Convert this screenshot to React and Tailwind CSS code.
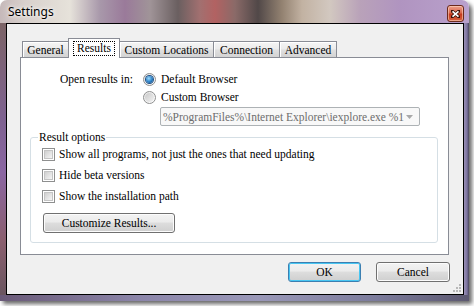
import React from "react";

const TXT = "text-[11.5px] leading-[16px] text-black";
const TAB_FONT = "font-['Liberation_Serif'] " + TXT;
const PANEL_FONT = "font-[family-name:Liberation_Serif] " + TXT;
const BTN_FONT = "[font-family:Liberation_Serif] " + TXT;

const TABS = [
  { label: "General", w: "w-[47px]" },
  { label: "Results", w: "w-[52px]", active: true },
  { label: "Custom Locations", w: "w-[95px]" },
  { label: "Connection", w: "w-[67px]" },
  { label: "Advanced", w: "w-[58px]" },
];

function Radio({ checked }) {
  return (
    <span className="flex h-[13px] w-[13px] shrink-0 items-center justify-center rounded-full border border-[#8e8f8f] bg-[linear-gradient(135deg,#e6e6e6,#ffffff)]">
      {checked ? (
        <span className="h-[7px] w-[7px] rounded-full bg-[radial-gradient(circle_at_40%_35%,#9edcff,#2a7fc4_55%,#0b3c73)] shadow-[0_0_0_1px_#1d4f86]" />
      ) : (
        <span className="h-[9px] w-[9px] rounded-full bg-[linear-gradient(135deg,#c9c9c9,#f2f2f2)]" />
      )}
    </span>
  );
}

function Checkbox() {
  return (
    <span className="flex h-[13px] w-[13px] shrink-0 items-center justify-center border border-[#8e8f8f] bg-white">
      <span className="h-[9px] w-[9px] border border-[#c4c4c4] bg-[linear-gradient(135deg,#cfcfcf,#f5f5f5)]" />
    </span>
  );
}

function Button({ children, width, isDefault }) {
  return (
    <button
      type="button"
      className={
        "flex h-[20px] items-center justify-center rounded-[3px] border bg-[linear-gradient(#f3f3f3,#ebebeb_45%,#dddddd_50%,#cfcfcf)] pb-px " +
        BTN_FONT +
        " " +
        width +
        (isDefault
          ? " border-[#3c7fb1] shadow-[inset_0_0_0_1px_#48c6f2]"
          : " border-[#707070] shadow-[inset_0_0_0_1px_#fcfcfc]")
      }
    >
      {children}
    </button>
  );
}

function CheckRow({ children }) {
  return (
    <div className="flex h-[16px] items-center gap-[4px]">
      <Checkbox />
      <span>{children}</span>
    </div>
  );
}

export default function App() {
  return (
    <div className="h-[306px] w-[474px] overflow-hidden bg-white">
      <div className="flex h-[301px] w-[469px] flex-col overflow-hidden rounded-t-[7px] shadow-[3px_3px_4px_rgba(0,0,0,0.6)]">
        {/* title bar */}
        <div className="flex h-[23px] shrink-0 items-start justify-between bg-[linear-gradient(90deg,#c6b9ba_0px,#d8d0cc_25px,#e6e2da_70px,#a898aa_100px,#9a7a9a_125px,#a09498_150px,#6a5f60_178px,#a27070_200px,#b26262_215px,#8a6a68_235px,#514848_258px,#938271_282px,#c2b2a2_302px,#d2c8c0_330px,#b9a2b9_360px,#b094c0_400px,#b9a1cc_469px)] pl-[8px] pr-[5px]">
          <span className="mt-[4px] font-sans text-[12px] leading-[16px] text-black [text-shadow:0_0_6px_#fff,0_0_3px_#fff]">
            Settings
          </span>
          <span className="mt-[5px] flex h-[17px] w-[17px] items-center justify-center rounded-[3px] border border-[#6b2a1c] bg-[linear-gradient(#eea08a,#d8674c_45%,#c5391d_55%,#d7623f)] shadow-[inset_0_0_0_1px_rgba(255,220,200,0.55)]">
            <svg width="9" height="8" viewBox="0 0 9 8">
              <path d="M1 1 L8 7 M8 1 L1 7" stroke="#3a1208" strokeWidth="3.2" strokeLinecap="square" />
              <path d="M1.5 1.3 L7.5 6.7 M7.5 1.3 L1.5 6.7" stroke="#ffffff" strokeWidth="1.6" />
            </svg>
          </span>
        </div>

        <div className="flex flex-1">
          <div className="w-[6px] bg-[linear-gradient(#7c6466,#7e6290_35%,#8a66a2_55%,#8a5f6e_80%,#6a5660)]" />

          {/* client area */}
          <div className="flex flex-1 flex-col border border-black bg-[#f0f0f0] pl-[13px] pt-[14px]">
            {/* tab strip */}
            <div className="ml-[2px] flex items-end">
              {TABS.map((t, i) =>
                t.active ? (
                  <div
                    key={t.label}
                    className={
                      "relative z-10 -mb-px -ml-px flex h-[20px] items-start justify-center border border-b-0 border-[#898c95] bg-white pt-[2px] " +
                      t.w +
                      " " +
                      TAB_FONT
                    }
                  >
                    <span className="border border-dotted border-black px-[3px] leading-[13px]">{t.label}</span>
                  </div>
                ) : (
                  <div
                    key={t.label}
                    className={
                      "flex h-[16px] items-center justify-center border border-b-0 border-[#898c95] bg-[linear-gradient(#f5f5f5,#ececec_45%,#dfdfdf_55%,#d3d3d3)] pt-px shadow-[inset_1px_1px_0_#ffffff] " +
                      (i > 0 ? "-ml-px " : "") +
                      t.w +
                      " " +
                      TAB_FONT
                    }
                  >
                    {t.label}
                  </div>
                )
              )}
            </div>

            {/* tab panel */}
            <div className={"flex h-[198px] w-[429px] flex-col border border-[#898c95] bg-white pt-[13px] " + PANEL_FONT}>
              <div className="flex h-[16px] items-center pl-[39px]">
                <span className="w-[83px]">Open results in:</span>
                <Radio checked />
                <span className="ml-[5px]">Default Browser</span>
              </div>
              <div className="mt-[2px] flex h-[16px] items-center pl-[122px]">
                <Radio />
                <span className="ml-[5px]">Custom Browser</span>
              </div>
              <div className="ml-[139px] mt-[2px] flex h-[19px] w-[260px] items-center justify-between rounded-[2px] border border-[#adb2b5] bg-[#f8f8f8] pl-[2px] pr-[6px] text-[#6d6d6d]">
                <span className="whitespace-nowrap text-[#6d6d6d]">%ProgramFiles%\Internet Explorer\iexplore.exe %1</span>
                <svg width="7" height="4" viewBox="0 0 7 4" className="shrink-0">
                  <path d="M0 0 H7 L3.5 4 Z" fill="#a8a8a8" />
                </svg>
              </div>

              <fieldset className="ml-[9px] mt-[4px] w-[408px] rounded-[3px] border border-[#d5dfe5] px-[7px] pb-[9px]">
                <legend className="px-px leading-[14px]">Result options</legend>
                <div className="ml-[4px] mt-[2px] flex flex-col gap-[5px]">
                  <CheckRow>Show all programs, not just the ones that need updating</CheckRow>
                  <CheckRow>Hide beta versions</CheckRow>
                  <CheckRow>Show the installation path</CheckRow>
                </div>
                <div className="ml-[5px] mt-[9px] flex">
                  <Button width="w-[132px]">Customize Results...</Button>
                </div>
              </fieldset>
            </div>

            {/* dialog buttons */}
            <div className="mt-[7px] flex justify-end gap-[15px] pr-[13px]">
              <Button width="w-[73px]" isDefault>
                OK
              </Button>
              <Button width="w-[74px]">Cancel</Button>
            </div>

            <div className="flex flex-1 items-end justify-end pb-[2px] pr-[2px]">
              <svg width="9" height="9" viewBox="0 0 9 9">
                <g fill="#b8b8b8">
                  <rect x="7" y="1" width="2" height="2" />
                  <rect x="4" y="4" width="2" height="2" />
                  <rect x="7" y="4" width="2" height="2" />
                  <rect x="1" y="7" width="2" height="2" />
                  <rect x="4" y="7" width="2" height="2" />
                  <rect x="7" y="7" width="2" height="2" />
                </g>
              </svg>
            </div>
          </div>

          <div className="w-[5px] bg-[linear-gradient(90deg,#9a90b4,#7c74a0_60%,#4a4658)]" />
        </div>

        <div className="h-[6px] shrink-0 bg-[linear-gradient(90deg,#6a5a78,#8c86aa_30%,#9a98b8_55%,#7c7c9c_80%,#5c5870)]" />
      </div>
    </div>
  );
}
